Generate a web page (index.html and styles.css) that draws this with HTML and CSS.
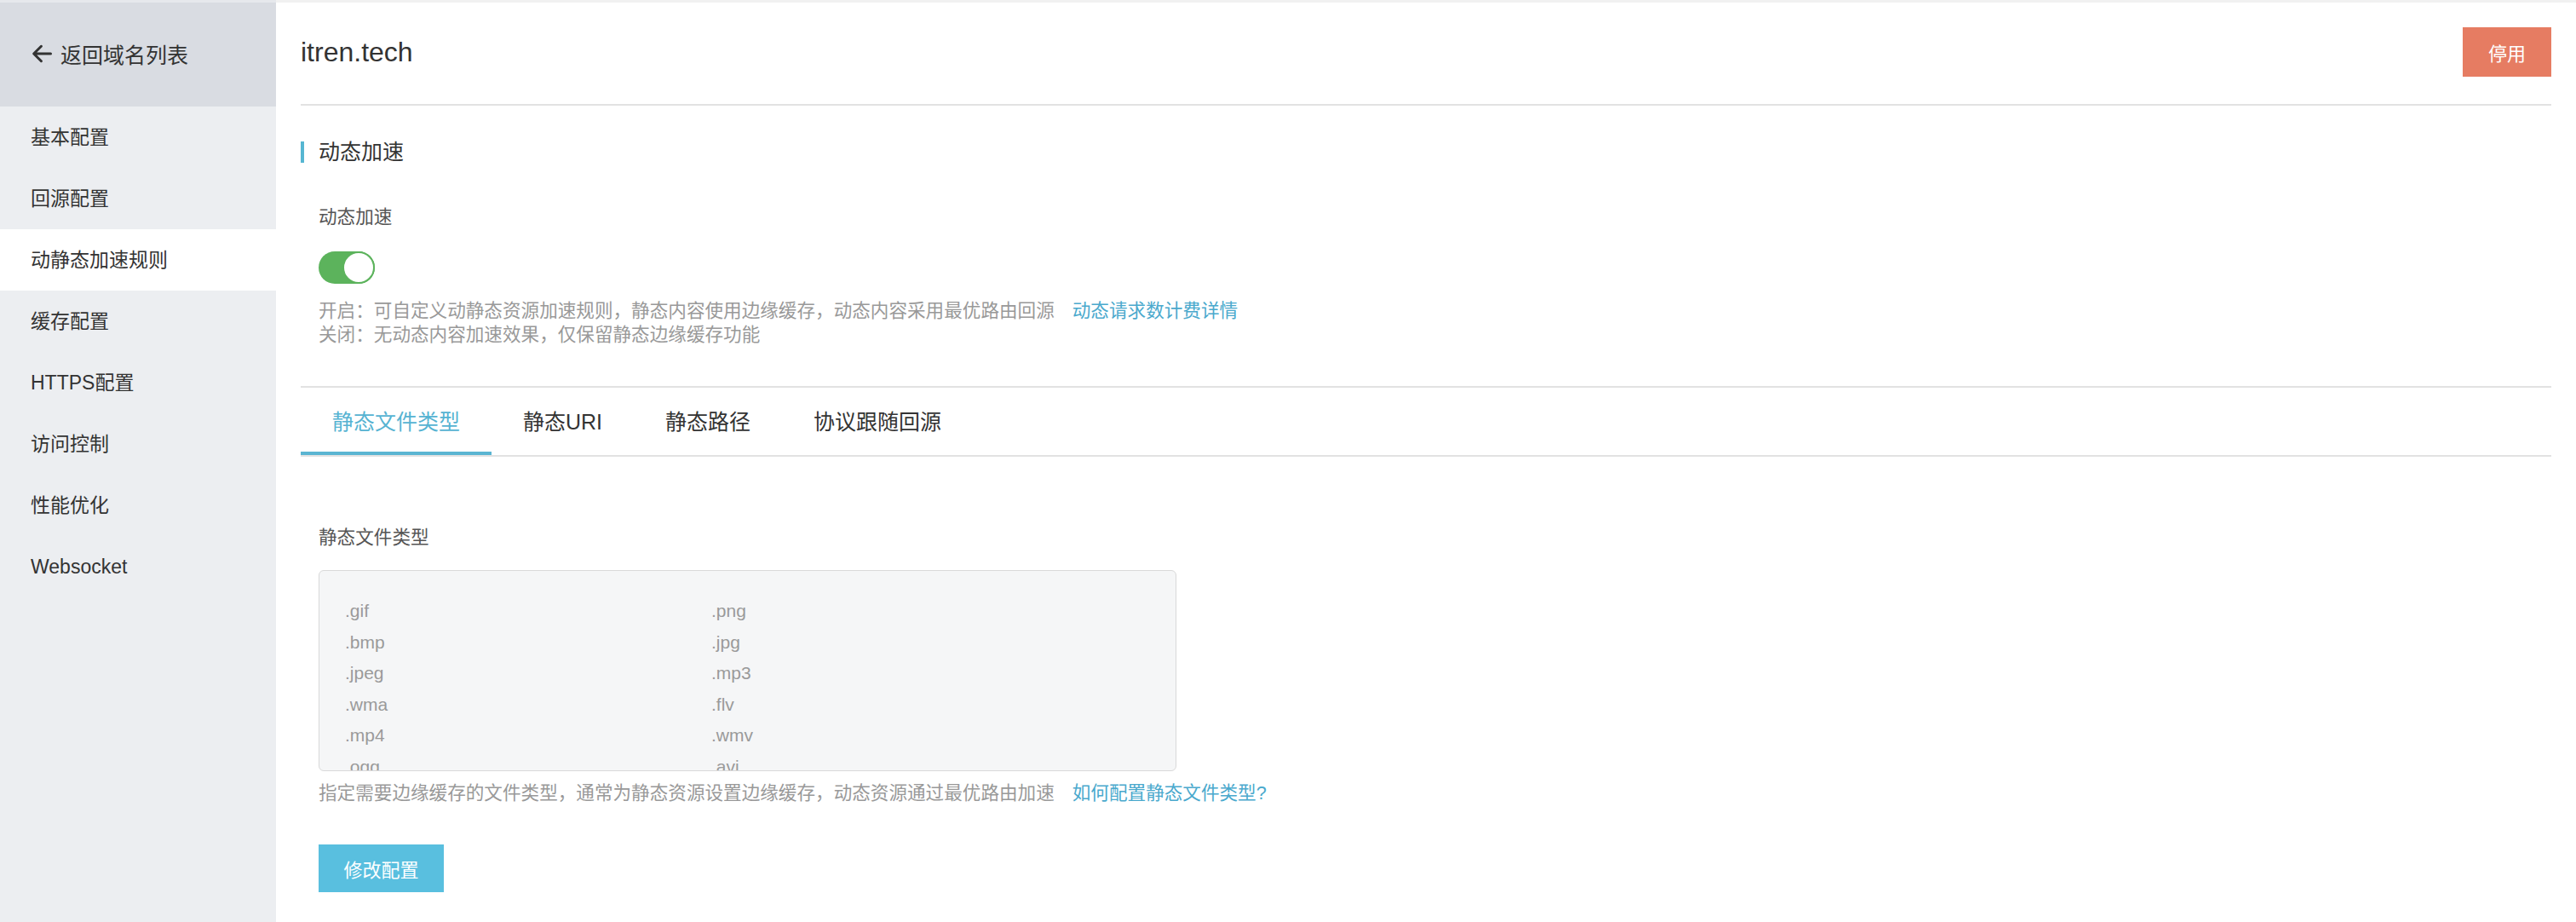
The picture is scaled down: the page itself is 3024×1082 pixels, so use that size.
FILE: index.html
```html
<!DOCTYPE html>
<html lang="zh-CN">

<head>
    <meta charset="UTF-8">
    <meta name="viewport" content="width=device-width, initial-scale=1.0">
    <title>动静态加速规则 - itren.tech</title>
    <link rel="stylesheet" href="styles.css">
</head>

<body>
    <div class="page">
        <!-- 左侧菜单 -->
        <aside class="side">
            <div class="side-head">
                <svg class="back-icon" viewBox="0 0 24 24" width="28" height="28">
                    <path d="M21 12H4.5M11.5 4.5L4 12l7.5 7.5" fill="none" stroke="#333" stroke-width="2.6" stroke-linecap="round" stroke-linejoin="round"/>
                </svg>
                <span>返回域名列表</span>
            </div>
            <ul class="menu">
                <li class="menu-item">基本配置</li>
                <li class="menu-item">回源配置</li>
                <li class="menu-item active">动静态加速规则</li>
                <li class="menu-item">缓存配置</li>
                <li class="menu-item">HTTPS配置</li>
                <li class="menu-item">访问控制</li>
                <li class="menu-item">性能优化</li>
                <li class="menu-item">Websocket</li>
            </ul>
        </aside>

        <!-- 主体内容 -->
        <main class="main">
            <div class="head">
                <h1 class="domain">itren.tech</h1>
                <button class="btn btn-stop">停用</button>
            </div>

            <h2 class="sec-title">动态加速</h2>
            <div class="form">
                <div class="label">动态加速</div>
                <div class="switch on"><span class="knob"></span></div>
                <p class="desc">
                    开启：可自定义动静态资源加速规则，静态内容使用边缘缓存，动态内容采用最优路由回源<a class="link" href="#">动态请求数计费详情</a><br>
                    关闭：无动态内容加速效果，仅保留静态边缘缓存功能
                </p>
            </div>

            <div class="divider"></div>

            <!-- 选项卡 -->
            <div class="tabs">
                <div class="tab active">静态文件类型</div>
                <div class="tab">静态URI</div>
                <div class="tab">静态路径</div>
                <div class="tab">协议跟随回源</div>
            </div>

            <div class="form">
                <div class="label label-file">静态文件类型</div>
                <div class="types">
                    <span>.gif</span><span>.png</span>
                    <span>.bmp</span><span>.jpg</span>
                    <span>.jpeg</span><span>.mp3</span>
                    <span>.wma</span><span>.flv</span>
                    <span>.mp4</span><span>.wmv</span>
                    <span>.ogg</span><span>.avi</span>
                </div>
                <p class="desc help">指定需要边缘缓存的文件类型，通常为静态资源设置边缘缓存，动态资源通过最优路由加速<a class="link" href="#">如何配置静态文件类型?</a></p>
                <button class="btn btn-edit">修改配置</button>
            </div>
        </main>
    </div>
</body>

</html>
```

FILE: styles.css
```css
* {
    box-sizing: border-box;
}

body {
    margin: 0;
    font-family: "Liberation Sans", "Noto Sans CJK SC", sans-serif;
    color: #333;
    background: #fff;
}

ul,
p,
h1,
h2 {
    margin: 0;
    padding: 0;
}

.page {
    display: flex;
    min-height: 100vh;
}

/* 左侧菜单 */
.side {
    width: 324px;
    flex-shrink: 0;
    background: #eceef1;
}

.side-head {
    height: 125px;
    display: flex;
    align-items: center;
    padding-left: 35px;
    background: #d9dce2;
    font-size: 25px;
    box-shadow: inset 0 3px 0 #e6e8ec;
}

.side-head span {
    margin-left: 8px;
}

.menu {
    list-style: none;
}

.menu-item {
    height: 72px;
    line-height: 72px;
    padding-left: 36px;
    font-size: 23px;
    color: #333;
}

.menu-item.active {
    background: #fff;
}

/* 主体 */
.main {
    flex: 1;
    padding: 0 29px;
    box-shadow: inset 0 3px 0 #f1f1f1;
}

.head {
    height: 124px;
    display: flex;
    align-items: center;
    justify-content: space-between;
    border-bottom: 2px solid #e2e2e2;
}

.domain {
    font-size: 32px;
    font-weight: normal;
    color: #333;
}

.btn {
    border: none;
    color: #fff;
    font-family: inherit;
    font-size: 22px;
    cursor: pointer;
}

.btn-stop {
    width: 104px;
    height: 58px;
    background: #e67c62;
}

.sec-title {
    margin-top: 42px;
    height: 25px;
    line-height: 25px;
    padding-left: 17px;
    border-left: 4px solid #56b6d2;
    font-size: 25px;
    font-weight: normal;
}

.form {
    padding-left: 21px;
}

.label {
    margin-top: 49px;
    height: 30px;
    line-height: 30px;
    font-size: 21.6px;
    color: #555;
}

.switch {
    margin-top: 25px;
    width: 66px;
    height: 38px;
    border-radius: 19px;
    background: #5cb35c;
    display: flex;
    justify-content: flex-end;
}

.knob {
    width: 38px;
    height: 38px;
    border-radius: 50%;
    background: #fff;
    border: 2px solid #5cb35c;
}

.desc {
    margin-top: 18px;
    line-height: 28px;
    font-size: 21.6px;
    color: #999;
}

.link {
    margin-left: 21px;
    color: #4aa9cd;
    text-decoration: none;
}

.divider {
    margin-top: 46px;
    height: 2px;
    background: #e2e2e2;
}

/* 选项卡 */
.tabs {
    display: flex;
    border-bottom: 2px solid #e2e2e2;
}

.tab {
    padding: 27px 37px 22px;
    line-height: 26px;
    font-size: 25px;
    color: #333;
    border-bottom: 4px solid transparent;
}

.tab.active {
    color: #56b3d2;
    border-bottom-color: #5ab5d2;
}

.label-file {
    margin-top: 80px;
}

.types {
    margin-top: 23px;
    width: 1007px;
    height: 236px;
    overflow: hidden;
    padding: 29px 30px 0;
    display: grid;
    grid-template-columns: 430px 1fr;
    grid-auto-rows: 36.5px;
    align-items: center;
    background: #f5f6f7;
    border: 1px solid #d9d9d9;
    border-radius: 6px;
    font-size: 21px;
    color: #9a9a9a;
}

.help {
    margin-top: 12px;
}

.btn-edit {
    display: block;
    margin-top: 46px;
    width: 147px;
    height: 56px;
    background: #59bfdf;
}
```
